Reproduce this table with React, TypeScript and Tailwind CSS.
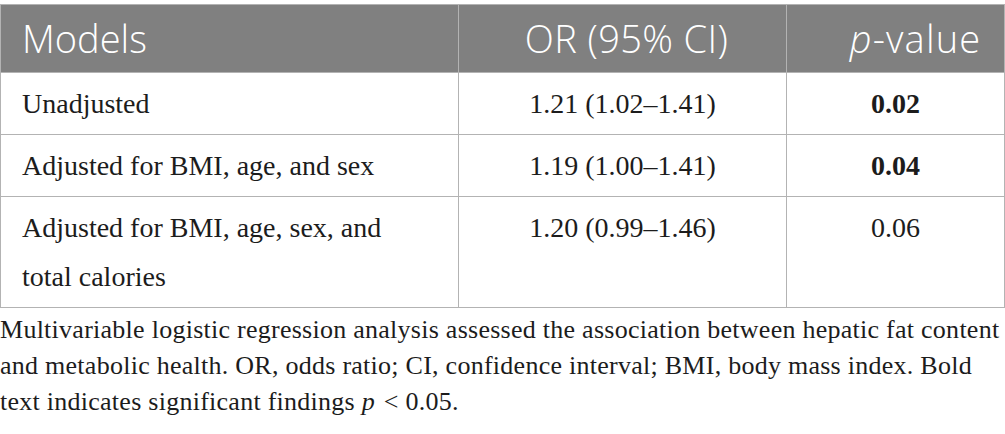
import React from 'react';

const rows = [
	{ model: 'Unadjusted', or: '1.21 (1.02–1.41)', p: '0.02', bold: true },
	{ model: 'Adjusted for BMI, age, and sex', or: '1.19 (1.00–1.41)', p: '0.04', bold: true },
	{ model: 'Adjusted for BMI, age, sex, and total calories', or: '1.20 (0.99–1.46)', p: '0.06', bold: false },
];

export default function App() {
	return (
		<div className="w-[1005px] bg-white pt-[4px]">
			<table className="w-[1004px] table-fixed border-collapse">
				<colgroup>
					<col className="w-[458px]" />
					<col className="w-[328px]" />
					<col className="w-[218px]" />
				</colgroup>
				<thead>
					<tr className="h-[68px] bg-[#808080] font-['Open_Sans',sans-serif] text-[38px] font-light text-white">
						<th className="border border-[#b3b3b3] px-[21px] text-left font-light">Models</th>
						<th className="border border-[#b3b3b3] pl-[8px] text-center font-light tracking-[0.01em]">OR (95% CI)</th>
						<th className="border border-[#b3b3b3] pl-[40px] text-center font-light tracking-[0.03em]">
							<span className="italic">p</span>-value
						</th>
					</tr>
				</thead>
				<tbody className="font-['Liberation_Serif',serif] text-[28px] leading-[49px] text-[#1c1c1c]">
					{rows.map((r) => (
						<tr key={r.model}>
							<td className="border border-[#b3b3b3] py-[6px] pr-[40px] pl-[21px] align-top">{r.model}</td>
							<td className="border border-[#b3b3b3] py-[6px] text-center align-top">{r.or}</td>
							<td className={`border border-[#b3b3b3] py-[6px] text-center align-top ${r.bold ? 'font-bold' : ''}`}>
								{r.p}
							</td>
						</tr>
					))}
				</tbody>
			</table>
			<p className="mt-[4px] font-['Liberation_Serif',serif] text-[26px] leading-[36px] tracking-[0.01em] text-[#1c1c1c]">
				Multivariable logistic regression analysis assessed the association between hepatic fat content and metabolic
				health. OR, odds ratio; CI, confidence interval; BMI, body mass index. Bold text indicates significant findings{' '}
				<span className="mr-[2px] italic">p</span> &lt; 0.05.
			</p>
		</div>
	);
}
